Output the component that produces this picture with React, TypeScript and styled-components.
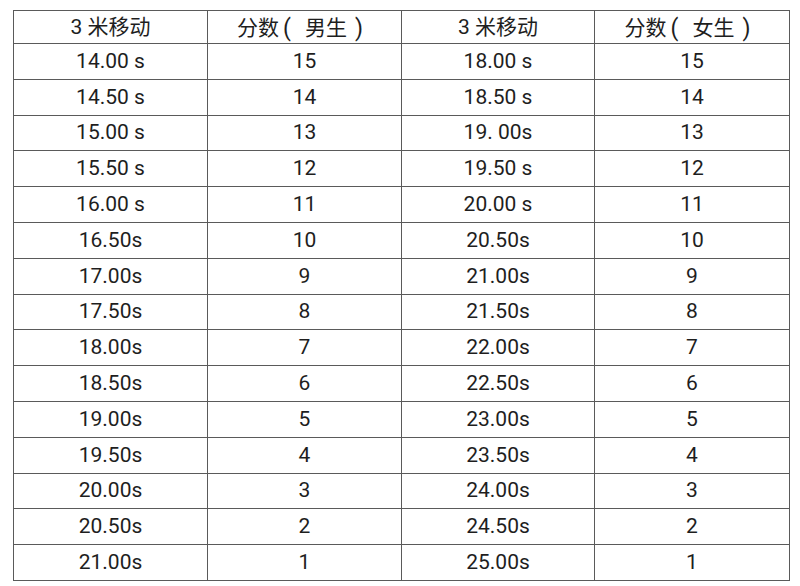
import React from "react";
import styled, { createGlobalStyle } from "styled-components";

const GlobalStyle = createGlobalStyle`
  html, body {
    margin: 0;
    padding: 0;
    background: #ffffff;
  }
`;

const ROWS: [string, string, string, string][] = [
  ["14.00 s", "15", "18.00 s", "15"],
  ["14.50 s", "14", "18.50 s", "14"],
  ["15.00 s", "13", "19. 00s", "13"],
  ["15.50 s", "12", "19.50 s", "12"],
  ["16.00 s", "11", "20.00 s", "11"],
  ["16.50s", "10", "20.50s", "10"],
  ["17.00s", "9", "21.00s", "9"],
  ["17.50s", "8", "21.50s", "8"],
  ["18.00s", "7", "22.00s", "7"],
  ["18.50s", "6", "22.50s", "6"],
  ["19.00s", "5", "23.00s", "5"],
  ["19.50s", "4", "23.50s", "4"],
  ["20.00s", "3", "24.00s", "3"],
  ["20.50s", "2", "24.50s", "2"],
  ["21.00s", "1", "25.00s", "1"],
];

const COL_WIDTHS = [194, 194, 193, 195];

function ScoreHead({ who }: { who: string }) {
  return (
    <HeadCell>
      分数<Paren $open>(</Paren>
      {who}
      <Paren>)</Paren>
    </HeadCell>
  );
}

export default function App() {
  return (
    <>
      <GlobalStyle />
      <Page>
        <ScoreTable>
          <colgroup>
            {COL_WIDTHS.map((w, i) => (
              <Col key={i} $w={w} />
            ))}
          </colgroup>
          <thead>
            <HeadRow>
              <HeadCell>3 米移动</HeadCell>
              <ScoreHead who="男生" />
              <HeadCell>3 米移动</HeadCell>
              <ScoreHead who="女生" />
            </HeadRow>
          </thead>
          <tbody>
            {ROWS.map((r, i) => (
              <BodyRow key={i}>
                {r.map((c, j) => (
                  <Cell key={j}>{c}</Cell>
                ))}
              </BodyRow>
            ))}
          </tbody>
        </ScoreTable>
      </Page>
    </>
  );
}

const Page = styled.div`
  padding: 10px 0 0 13px;
  width: 800px;
  height: 586px;
  box-sizing: border-box;
  overflow: hidden;
`;

const ScoreTable = styled.table`
  border-collapse: collapse;
  table-layout: fixed;
  width: 777px;
  font-family: Roboto, "Noto Sans CJK SC", sans-serif;
  font-size: 21px;
  color: #1e1e1e;
  border: 1.5px solid #555;
`;

const Col = styled.col<{ $w: number }>`
  width: ${(p) => p.$w}px;
`;

const HeadRow = styled.tr`
  height: 33px;
`;

const BodyRow = styled.tr`
  height: 35.8px;
`;

const Cell = styled.td`
  border: 1px solid #5a5a5a;
  padding: 0;
  text-align: center;
  vertical-align: middle;
  line-height: 1;
`;

const HeadCell = styled.th`
  border: 1px solid #5a5a5a;
  padding: 0;
  text-align: center;
  vertical-align: middle;
  line-height: 1;
  font-weight: 400;
  font-size: 21px;
  white-space: nowrap;
`;

const Paren = styled.span<{ $open?: boolean }>`
  font-family: Roboto, sans-serif;
  font-size: 23px;
  position: relative;
  top: 1px;
  margin: ${(p) => (p.$open ? "0 14px 0 4px" : "0 9px 0 8px")};
`;
